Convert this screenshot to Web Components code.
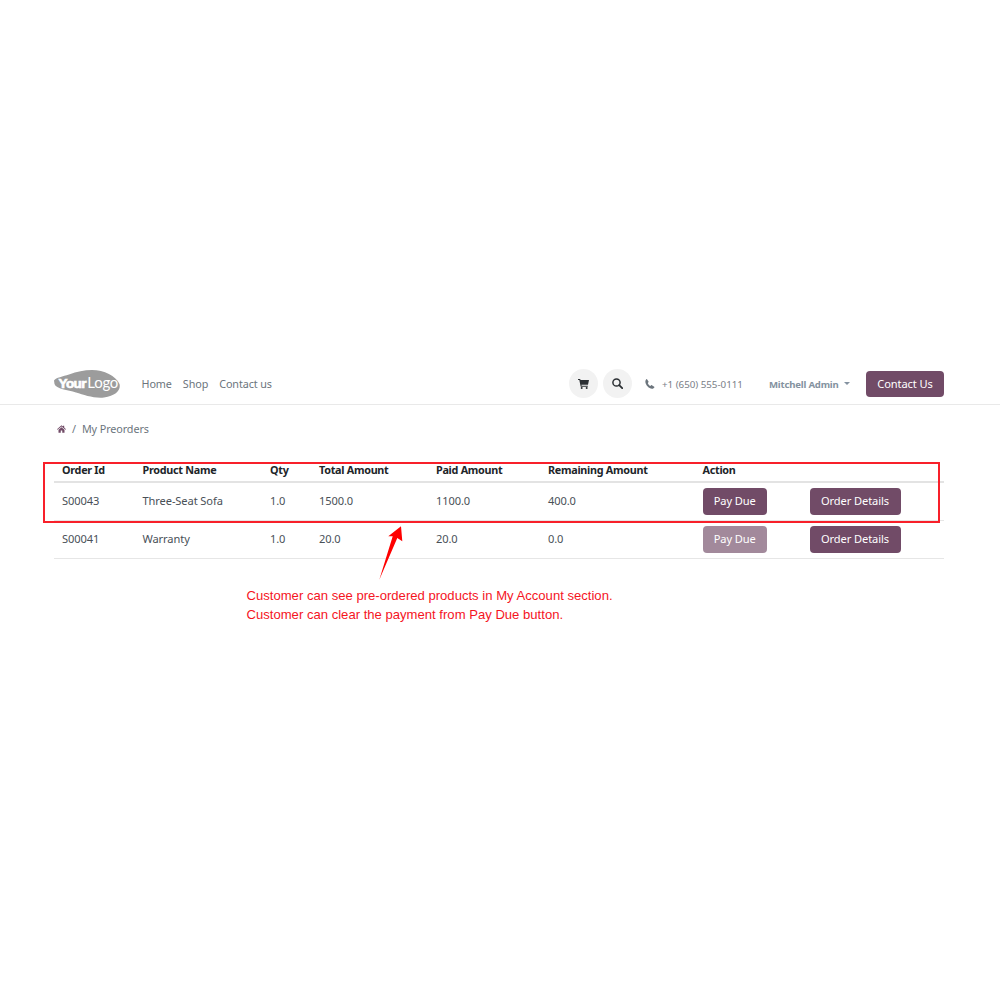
<!DOCTYPE html>
<html>
<head>
<meta charset="utf-8">
<title>My Preorders</title>
<style>
    html, body { margin: 0; background: #fff; }
    body { font-family: "Noto Sans", sans-serif; font-size: 11.1px; letter-spacing: -.1px; color: #495057; }
</style>
</head>
<body>
<preorder-page>
    <site-header slot="header"></site-header>
    <crumb-bar slot="crumbs">My Preorders</crumb-bar>
    <preorder-table slot="table">
        <preorder-row order="S00043" product="Three-Seat Sofa" qty="1.0" total="1500.0" paid="1100.0" remaining="400.0"></preorder-row>
        <preorder-row order="S00041" product="Warranty" qty="1.0" total="20.0" paid="20.0" remaining="0.0" settled></preorder-row>
    </preorder-table>
    <red-note slot="note"></red-note>
</preorder-page>

<script>
class PreorderPage extends HTMLElement {
    constructor() {
        super();
        this.attachShadow({ mode: 'open' }).innerHTML = `
            <style>
                :host { display: block; padding-top: 363px; position: relative; height: 637px; }
                main { padding: 0 56px 0 54px; }
            </style>
            <slot name="header"></slot>
            <main>
                <slot name="crumbs"></slot>
                <slot name="table"></slot>
            </main>
            <slot name="note"></slot>
        `;
    }
}

class SiteHeader extends HTMLElement {
    constructor() {
        super();
        this.attachShadow({ mode: 'open' }).innerHTML = `
            <style>
                :host { display: flex; align-items: center; height: 41px; padding: 0 56px 0 54px; border-bottom: 1px solid #e9e9e9; }
                .logo { width: 66px; height: 28px; position: relative; margin-right: 21.500px; }
                .logo svg { display: block; }
                .logo span { position: absolute; left: 4.500px; top: 4px; font: 700 13.500px/17px "Liberation Sans", sans-serif; color: #fff; -webkit-text-stroke: .7px #fff; letter-spacing: -.6px; white-space: nowrap; }
                .logo i { font: 400 15px/17px Lato, sans-serif; -webkit-text-stroke: 0; letter-spacing: -.3px; margin-left: 1.500px; }
                nav { display: flex; gap: 11px; color: #6c757d; flex: 1; font-size: 10.800px; }
                .round { width: 29px; height: 29px; border-radius: 50%; background: #f2f2f2; display: flex; align-items: center; justify-content: center; margin-right: 5.500px; }
                .phone { display: flex; align-items: center; margin-left: 7.500px; color: #7a8087; font-size: 9.800px; width: 124px; letter-spacing: -.03px; }
                .phone span, .user span { padding-top: 1px; }
                .phone svg { margin-right: 7px; }
                .user { display: flex; align-items: center; font-weight: 700; font-size: 9.600px; letter-spacing: -.2px; color: #8492a0; width: 97px; }
                .user b { margin-left: 5.500px; width: 0; height: 0; border: 3px solid transparent; border-top-color: #8492a0; border-bottom: 0; }
                .cta { background: #714b67; color: #fff; border-radius: 4px; width: 78px; height: 26px; display: flex; align-items: center; justify-content: center; font-size: 11.100px; }
            </style>
            <div class="logo">
                <svg width="66" height="28" viewBox="0 0 66 28"><path d="M0 10.500C2 7.500 9 6.500 15 4.500C23 1.500 30 0 38 0C50 0 62 6 65.500 14C67 20 62 26 50 27.500C40 28.500 30 25 22 22.500C14 20 2 19 .5 14Z" fill="#9c9c9c"/></svg>
                <span>Your<i>Logo</i></span>
            </div>
            <nav><span>Home</span><span>Shop</span><span>Contact us</span></nav>
            <div class="round">
                <svg width="11" height="10" viewBox="0 0 11 10" fill="#2b2f33"><path d="M0 0h2.200l.3 1H11l-1 4.800H3.400l.2 1H9.800v1H2.700L1.300 1H0z"/><circle cx="3.700" cy="9" r="1"/><circle cx="8.700" cy="9" r="1"/></svg>
            </div>
            <div class="round">
                <svg width="11" height="11" viewBox="0 0 11 11" fill="none" stroke="#2b2f33" stroke-width="1.500"><circle cx="4.500" cy="4.500" r="3.600"/><path d="M7.200 7.200l3 3" stroke-linecap="round" stroke-width="1.800"/></svg>
            </div>
            <div class="phone">
                <svg width="10" height="10" viewBox="0 0 10 10" fill="#6c757d"><path d="M2 .2l1.500 2.200c.2.300.1.600-.1.800l-.6.700c.5 1.300 1.200 2.200 2.500 3l.8-.7c.2-.2.500-.2.800 0l2.300 1.500c.3.200.3.400.2.600C8.900 9.300 8 9.900 7 9.800 3.800 9.300 1 6.500.4 3.200.2 1.900.8.800 1.700.1c.1-.1.200 0 .3.100z"/></svg>
                <span>+1 (650) 555-0111</span>
            </div>
            <div class="user"><span>Mitchell Admin</span><b></b></div>
            <div class="cta">Contact Us</div>
        `;
    }
}

class CrumbBar extends HTMLElement {
    constructor() {
        super();
        this.attachShadow({ mode: 'open' }).innerHTML = `
            <style>
                :host { display: flex; align-items: center; height: 47px; padding-left: 3px; color: #6c757d; font-size: 10.800px; }
                svg { margin-right: 6px; }
                span { margin-right: 6px; }
            </style>
            <svg width="9" height="8" viewBox="0 0 12 10" fill="#714b67"><path d="M6 0l2 1.700V.8h1.600v2.300L12 5.200l-.7.800L6 1.500.7 6 0 5.200z"/><path d="M2 6l4-3.400L10 6v4H7V7H5v3H2z"/></svg>
            <span>/</span>
            <slot></slot>
        `;
    }
}

// shared column widths for the head and the rows
const COLUMNS = 'grid-template-columns: 80.500px 127.500px 49px 117px 112px 154.500px 107px 1fr;';

class PreorderTable extends HTMLElement {
    constructor() {
        super();
        this.attachShadow({ mode: 'open' }).innerHTML = `
            <style>
                :host { display: block; margin-top: 8px; }
                .head { display: grid; ${COLUMNS} height: 21px; align-items: center; font-weight: 700; font-size: 10.800px; letter-spacing: -.28px; color: #212529; border-bottom: 2px solid #e3e3e3; }
                .head span { padding: 0 0 2px 8px; }
            </style>
            <div class="head">
                <span>Order Id</span><span>Product Name</span><span>Qty</span><span>Total Amount</span>
                <span>Paid Amount</span><span>Remaining Amount</span><span>Action</span><span></span>
            </div>
            <slot></slot>
        `;
    }
}

class PreorderRow extends HTMLElement {
    constructor() {
        super();
        const a = name => this.getAttribute(name);
        this.attachShadow({ mode: 'open' }).innerHTML = `
            <style>
                :host { display: grid; ${COLUMNS} height: 37px; align-items: center; border-bottom: 1px solid #e6e6e6; color: #495057; }
                span { padding: 0 0 2px 8px; }
                .btn { display: inline-flex; align-items: center; justify-content: center; box-sizing: border-box; height: 27px; padding-bottom: 2px; background: #714b67; color: #fff; border-radius: 4px; margin-left: 8px; }
                .pay { width: 64.500px; }
                .details { width: 91px; }
                .off { opacity: .65; }
            </style>
            <span>${a('order')}</span><span>${a('product')}</span><span>${a('qty')}</span><span>${a('total')}</span>
            <span>${a('paid')}</span><span>${a('remaining')}</span>
            <div><div class="btn pay ${this.hasAttribute('settled') ? 'off' : ''}">Pay Due</div></div>
            <div><div class="btn details">Order Details</div></div>
        `;
    }
}

// the red markup that was drawn over the screenshot
class RedNote extends HTMLElement {
    constructor() {
        super();
        this.attachShadow({ mode: 'open' }).innerHTML = `
            <style>
                :host { display: block; }
                .box { position: absolute; left: 43px; top: 462px; width: 892.500px; height: 57px; border: 2px solid #f8202a; }
                svg { position: absolute; left: 370px; top: 520px; }
                p { position: absolute; left: 246.500px; top: 586px; margin: 0; font: 13.100px/19px "Liberation Sans", sans-serif; letter-spacing: 0; color: #f5141e; white-space: nowrap; }
            </style>
            <div class="box"></div>
            <svg width="40" height="64" viewBox="0 0 40 64"><path d="M31 6.300L18.300 16.300h4.400L9.300 59.700 27.300 18l5 3.300z" fill="#fe0000"/></svg>
            <p>Customer can see pre-ordered products in My Account section.<br>Customer can clear the payment from Pay Due button.</p>
        `;
    }
}

customElements.define('preorder-page', PreorderPage);
customElements.define('site-header', SiteHeader);
customElements.define('crumb-bar', CrumbBar);
customElements.define('preorder-table', PreorderTable);
customElements.define('preorder-row', PreorderRow);
customElements.define('red-note', RedNote);
</script>
</body>
</html>
